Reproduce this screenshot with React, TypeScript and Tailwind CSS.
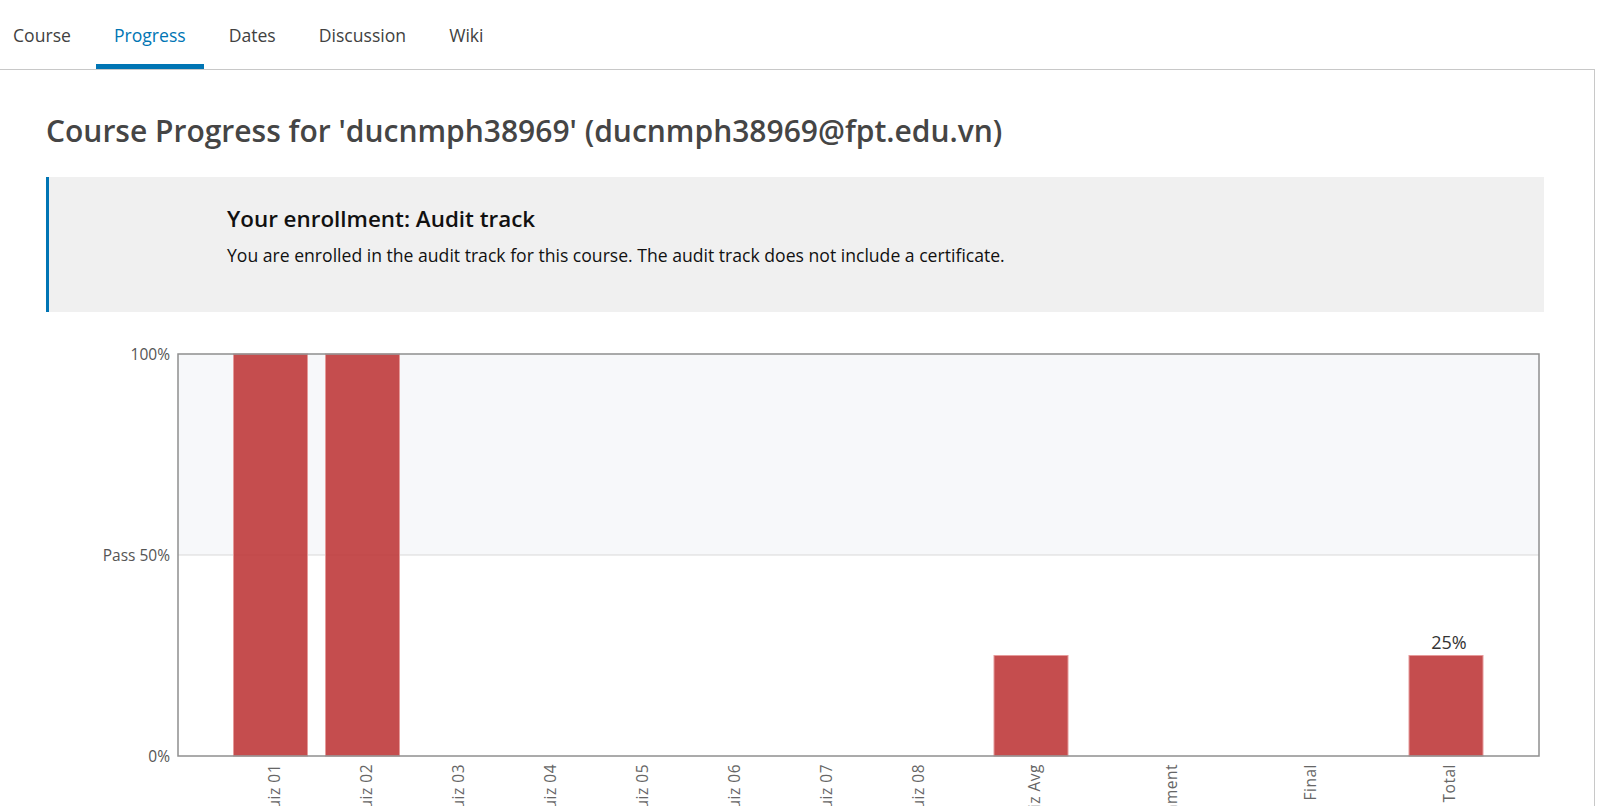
import React from "react";

const tabs = ["Course", "Progress", "Dates", "Discussion", "Wiki"];

const chart = {
  left: 178,
  right: 1539,
  top: 354,
  bottom: 756,
};

const bars = [
  { label: "Quiz 01", x: 270.5, value: 1 },
  { label: "Quiz 02", x: 362.5, value: 1 },
  { label: "Quiz 03", x: 454.5, value: 0 },
  { label: "Quiz 04", x: 546.5, value: 0 },
  { label: "Quiz 05", x: 638.5, value: 0 },
  { label: "Quiz 06", x: 730.5, value: 0 },
  { label: "Quiz 07", x: 822.5, value: 0 },
  { label: "Quiz 08", x: 914.5, value: 0 },
  { label: "Quiz Avg", x: 1031, value: 0.25 },
  { label: "Assignment", x: 1168, value: 0 },
  { label: "Final", x: 1307, value: 0 },
  { label: "Total", x: 1446, value: 0.25, showValue: true },
];

function yFor(v: number) {
  return chart.bottom - v * (chart.bottom - chart.top);
}

function ProgressChart() {
  const passY = yFor(0.5);
  const barW = 74;

  return (
    <svg
      width={1548}
      height={494}
      viewBox="46 312 1548 494"
      className="block"
      style={{ fontFamily: "'Open Sans', sans-serif" }}
    >
      {/* shaded area above pass line */}
      <rect x={chart.left} y={chart.top} width={chart.right - chart.left} height={passY - chart.top} fill="#f7f8fa" />
      <line x1={chart.left} x2={chart.right} y1={passY} y2={passY} stroke="#d9d9d9" strokeWidth={1} />

      {bars
        .filter((b) => b.value > 0)
        .map((b) => (
          <rect
            key={b.label}
            x={b.x - barW / 2}
            y={yFor(b.value)}
            width={barW}
            height={chart.bottom - yFor(b.value)}
            fill="#bf3a3b"
            fillOpacity={0.9}
            stroke="#e69a9a"
            strokeWidth={1}
          />
        ))}

      {/* frame */}
      <rect
        x={chart.left}
        y={chart.top}
        width={chart.right - chart.left}
        height={chart.bottom - chart.top}
        fill="none"
        stroke="#8f8f8f"
        strokeWidth={1.5}
      />

      {/* y labels */}
      <g fill="#555" fontSize={15.5} textAnchor="end">
        <text x={170} y={chart.top + 6}>100%</text>
        <text x={170} y={passY + 6}>Pass 50%</text>
        <text x={170} y={chart.bottom + 6}>0%</text>
      </g>

      {/* value label */}
      {bars
        .filter((b) => b.showValue)
        .map((b) => (
          <text key={b.label} x={b.x + 3} y={yFor(b.value) - 7} fill="#333" fontSize={18} textAnchor="middle">
            {Math.round(b.value * 100)}%
          </text>
        ))}

      {/* x labels */}
      <g fill="#666" fontSize={15.5} textAnchor="end" letterSpacing={0.5}>
        {bars.map((b) => (
          <text key={b.label} x={0} y={0} transform={`translate(${b.x + 9} 764) rotate(-90)`}>
            {b.label}
          </text>
        ))}
      </g>
    </svg>
  );
}

export default function App() {
  return (
    <div className="h-[806px] w-full overflow-hidden bg-white font-['Open_Sans',sans-serif]">
      <nav className="flex h-[69px] gap-[7px]">
        {tabs.map((tab, i) => (
          <a
            key={tab}
            className={`h-full border-b-[5px] pt-[23px] text-[17.6px] leading-[24px] ${i === 0 ? "pl-[13px] pr-[18px]" : "px-[18px]"} ${tab === "Progress" ? "border-[#0075b4] text-[#0075b4]" : "border-transparent text-[#414141]"}`}
          >
            {tab}
          </a>
        ))}
      </nav>

      <main className="w-[1595px] border-t border-r border-[#c8c8c8] pl-[46px] pr-[50px] pt-[43px]">
        <h1 className="text-[30px] font-semibold leading-[36px] text-[#454545]">
          Course Progress for 'ducnmph38969' (ducnmph38969@fpt.edu.vn)
        </h1>

        <div className="mt-[28px] h-[135px] border-l-[3px] border-[#0075b4] bg-[#f0f0f0] pl-[178px] pt-[28px]">
          <h2 className="text-[22.4px] font-semibold leading-[28px] text-[#111]">Your enrollment: Audit track</h2>
          <p className="mt-[10px] text-[17.6px] leading-[24px] text-[#111]">
            You are enrolled in the audit track for this course. The audit track does not include a certificate.
          </p>
        </div>

        <ProgressChart />
      </main>
    </div>
  );
}
